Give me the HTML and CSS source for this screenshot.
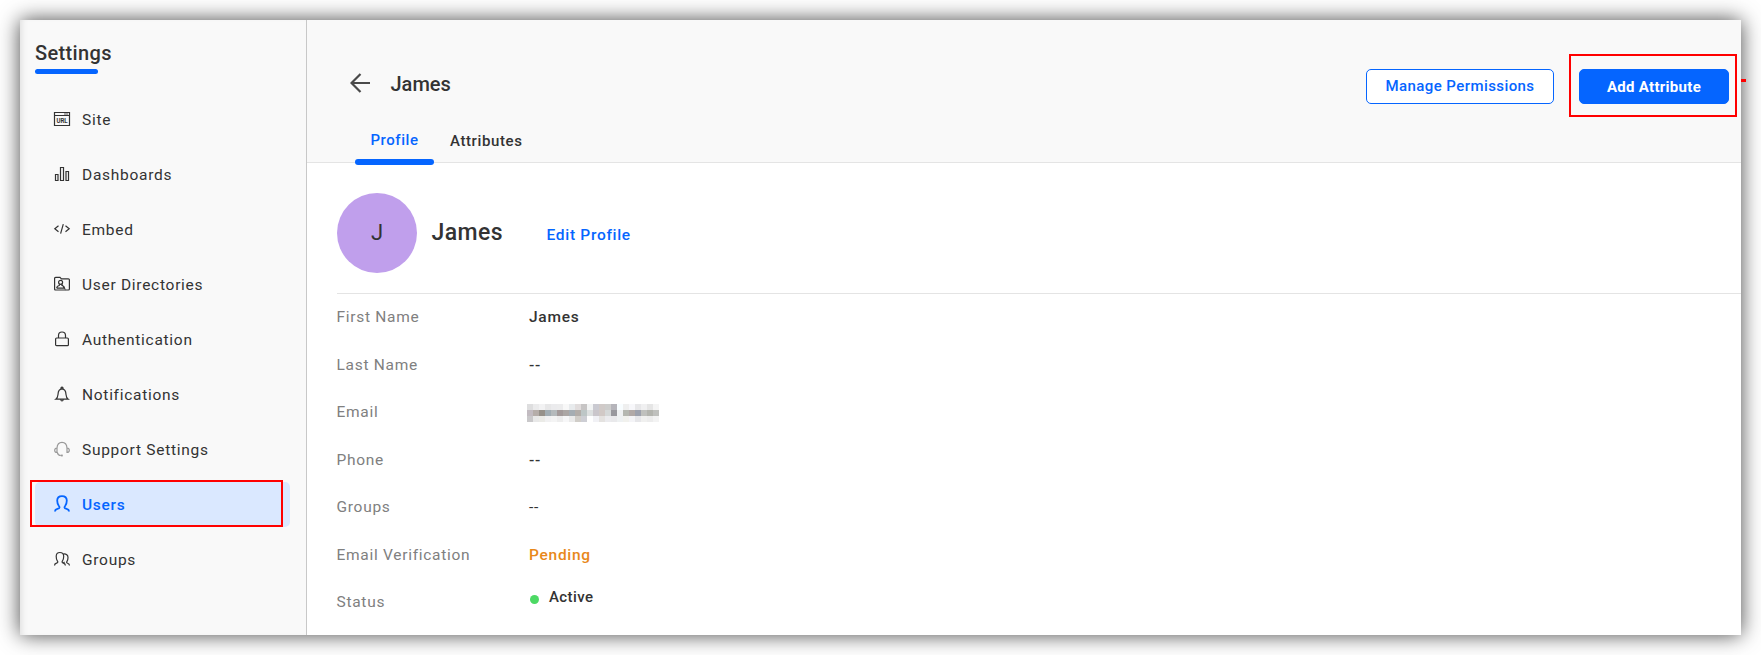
FILE: index.html
```html
<!DOCTYPE html>
<html lang="en">
<head>
<meta charset="utf-8">
<title>Settings - Users</title>
<link rel="stylesheet" href="styles.css">
</head>
<body>
<div class="window">
  <aside class="sidebar">
    <h1 class="sidebar-title">Settings</h1>
    <nav class="menu">
      <a class="item"><svg class="icon" viewBox="0 0 16 16"><path d="M.5 1.500h15v13H.5zM.5 4.500h15" /><path d="M10 3h4" stroke-width=".8"/><text x="2.400" y="12" class="url" textLength="11.200" lengthAdjust="spacingAndGlyphs">URL</text></svg><span>Site</span></a>
      <a class="item"><svg class="icon" viewBox="0 0 16 16"><path d="M1.500 8.500h2.500v6H1.500zM6.500 1.500H9.500v13H6.500zM12 5.500h2.500v9H12z"/></svg><span>Dashboards</span></a>
      <a class="item"><svg class="icon" viewBox="0 0 16 16"><path d="M4.500 4.800.8 7.800l3.700 3M11.500 4.800l3.700 3-3.700 3M9.300 3.200 6.600 12.600"/></svg><span>Embed</span></a>
      <a class="item"><svg class="icon" viewBox="0 0 16 16"><path d="M.6 13V2.400q0-1 1-1H6l1.400 1.400h7q1 0 1 1V13q0 1-1 1H1.600q-1 0-1-1z"/><circle cx="6.600" cy="6.300" r="2"/><path d="M2.600 12.200q.3-2.200 2.600-2.700l.4-1.300M7.600 8.200l.4 1.300q2.300.5 2.600 2.700z M2.600 12.200h8"/></svg><span>User Directories</span></a>
      <a class="item"><svg class="icon" viewBox="0 0 16 16"><rect x="1.600" y="7" width="12.800" height="7.700" rx="1"/><path d="M4.500 7V4.500a3.500 3.500 0 0 1 7 0V7"/></svg><span>Authentication</span></a>
      <a class="item"><svg class="icon" viewBox="0 0 16 16"><path d="M1.800 13.200h12.400q-2-1.500-2.200-4.700-.2-5.500-4-5.700-3.800.2-4 5.700-.2 3.200-2.200 4.700zM7 2.700q-.2-1.500 1-1.500t1 1.500M6.800 13.500q.1 1.500 1.200 1.500t1.200-1.500"/></svg><span>Notifications</span></a>
      <a class="item"><svg class="icon support" viewBox="0 0 16 16"><path d="M3 7q.4-5.600 5-5.600T13 7M3 7v4.500Q.7 11.500.7 9.300T3 7zM13 7v4.500q2.300 0 2.300-2.200T13 7zM3.300 11.500q.7 3 3.500 3"/><path d="M6.800 14.500h2" stroke-width="1.800"/></svg><span>Support Settings</span></a>
      <a class="item active"><svg class="icon" viewBox="0 0 16 16"><path d="M1 15.500q-.1-2.200 3-2.900 1.600-.3 1.500-1.300 0-.6-.6-1.300Q3.200 7.800 3.200 4.500 3.300.1 8 .1t4.800 4.400q0 3.300-1.700 5.500-.6.700-.6 1.300-.1 1 1.500 1.300 3.100.7 3 2.900"/></svg><span>Users</span></a>
      <a class="item"><svg class="icon" viewBox="0 0 16 16"><path d="M.5 14.500q0-1.800 2-2.400 1.500-.4 1.300-1.300L3.300 9.800Q2.200 8.200 2.200 5.300 2.300 1.500 5.900 1.500t3.800 3.800q0 2.900-1.200 4.500l-.4 1q-.2.900 1.300 1.300 2 .6 2 2.400M9.200 3q4.800-.4 4.800 3.500 0 2.300-1 3.800l-.4.900q-.2.700 1 1.100 1.800.6 1.900 2.200M9.500 11.800l1.100-.8"/></svg><span>Groups</span></a>
    </nav>
    <div class="callout callout-users"></div>
  </aside>
  <main class="main">
    <header class="header">
      <div class="header-top">
        <div class="heading"><svg class="back" viewBox="0 0 20 20"><path d="M20 10H1.500M10.500 1 1.500 10l9 9"/></svg><h2 class="page-title">James</h2></div>
        <div class="actions"><button class="btn btn-outline">Manage Permissions</button><button class="btn btn-primary">Add Attribute<i class="callout callout-add"></i></button></div>
      </div>
      <div class="tabs"><a class="tab current">Profile</a><a class="tab">Attributes</a></div>
    </header>
    <section class="content">
      <div class="profile"><div class="avatar">J</div><h3 class="name">James</h3><a class="edit">Edit Profile</a></div>
      <dl class="details">
        <dt>First Name</dt><dd>James</dd>
        <dt>Last Name</dt><dd>--</dd>
        <dt>Email</dt><dd><svg class="mosaic" viewBox="0 0 22 3" shape-rendering="crispEdges"></svg></dd>
        <dt>Phone</dt><dd>--</dd>
        <dt>Groups</dt><dd class="regular">--</dd>
        <dt>Email Verification</dt><dd class="pending">Pending</dd>
        <dt>Status</dt><dd class="status"><i class="dot"></i>Active</dd>
      </dl>
    </section>
  </main>
  <div class="marker"></div>
</div>
<script src="mosaic.js"></script>
</body>
</html>
```

FILE: mosaic.js
```js
// Shades of the redacted e-mail address, one list per row of cells.
const rows = [
  "dededf ebebec f2f2f3 e7e7e8 ebebed ececed f8f8f8 e8ebed e1dddd c7c5c5 f2f4f4 cacad1 d0cac8 cdcdcc b5b4ba f8fdff efefef f7f7fa e7e7e9 f0f0f1 e5e5e5 f4f4f4",
  "c2bbc1 b5ada9 96918a a2adb3 b5babc a49b9b aca7a5 a5adb3 b2ada9 bdc6c6 dde0e0 cac6cb d1c9c6 d5d8d8 98989d eff1f2 b5b7b0 b1a9a7 9da1ad bfc0bd b3b4ae bfc0bd",
  "c9c8ca e8e8e8 ebebe7 f1f1f2 f4f4f4 ededed f7f7f8 eaeaea d0cdc8 cdced4 ffffff f1f1f5 e4e2e0 ebebee e9e9eb eef1f2 f1f1ed f4f4f7 e6e6e9 f0f0ef ececec f3f3f3"
];
const mosaic = document.querySelector(".mosaic");
rows.forEach((row, y) => row.split(" ").forEach((shade, x) => {
  const cell = document.createElementNS("http://www.w3.org/2000/svg", "rect");
  Object.entries({ x, y, width: 1, height: 1, fill: "#" + shade }).forEach(([k, v]) => cell.setAttribute(k, v));
  mosaic.append(cell);
}));
```

FILE: styles.css
```css
* { box-sizing: border-box; }
body { margin: 0; padding: 20px; background: #fff; font-family: Roboto, "Liberation Sans", sans-serif; color: #333; overflow: hidden; }
h1, h2, h3, dl, dd { margin: 0; }
svg { fill: none; stroke: currentColor; display: block; }

.window { position: relative; display: flex; width: 1721px; height: 615px; background: #fff; box-shadow: 0 0 20px rgba(0, 0, 0, .72); }

.sidebar { position: relative; flex: none; width: 287px; padding: 17px 16px 0 15px; background: #f9f9f9; border-right: 1px solid #c8c8c8; box-shadow: inset 6px 0 6px -4px rgba(0, 0, 0, .1); }
.sidebar-title { height: 32px; font-size: 20px; line-height: 32px; font-weight: 500; letter-spacing: .35px; }
.sidebar-title::after { content: ""; display: block; width: 63px; height: 5px; border-radius: 3px; background: #0565ff; }
.menu { display: flex; flex-direction: column; gap: 10px; margin-top: 28px; }
.item { display: flex; align-items: center; gap: 12px; height: 45px; padding-left: 19px; border-radius: 5px; font-size: 15.500px; line-height: 17px; letter-spacing: .72px; }
.item span { padding-top: 2px; }
.icon { width: 16px; height: 16px; margin-top: -1px; overflow: visible; stroke-width: 1.200; }
.url { font: 700 6.500px Roboto, sans-serif; fill: #333; stroke: none; letter-spacing: 0; }
.support { color: #999; }
.active { background: #dae8ff; color: #0565ff; font-weight: 500; }
.active .icon { stroke-width: 1.800; }

.callout { position: absolute; border: 2px solid #f00; }
.callout-users { left: 10px; top: 460px; width: 253px; height: 47px; }
.callout-add { left: -11px; top: -16px; width: 168px; height: 63px; }
.marker { position: absolute; left: 1721px; top: 59px; width: 5px; height: 3px; background: #f00; }

.main { flex: 1; }
.header { display: flex; flex-direction: column; height: 143px; background: #f9f9f9; border-bottom: 1px solid #e4e4e4; }
.header-top { display: flex; justify-content: space-between; padding: 49px 12px 0 43px; height: 97px; }
.heading { display: flex; gap: 20.500px; height: 29px; }
.back { width: 20px; height: 20px; margin-top: 4px; stroke: #4a4a4a; stroke-width: 2.200; }
.page-title { font-size: 20px; line-height: 30px; font-weight: 500; }
.actions { display: flex; gap: 25px; }
.btn { position: relative; height: 35px; padding: 0; border: 1px solid #0565ff; border-radius: 5px; font: 500 15px/33px Roboto, sans-serif; letter-spacing: .42px; }
.btn-outline { width: 188px; background: #fff; color: #0565ff; }
.btn-primary { width: 150px; padding-top: 1px; line-height: 32px; background: #0565ff; color: #fff; font-weight: 700; letter-spacing: .3px; }
.tabs { display: flex; padding-left: 48px; gap: 16px; font-size: 15px; line-height: 54px; font-weight: 500; letter-spacing: .6px; }
.tab { height: 48px; }
.current { width: 79px; text-align: center; line-height: 52px; letter-spacing: .55px; color: #0565ff; }
.current::after { content: ""; display: block; height: 6px; margin-top: -7px; border-radius: 3px; background: #0565ff; }

.content { padding-left: 30px; }
.profile { display: flex; height: 131px; padding-top: 30px; border-bottom: 1px solid #e4e4e4; }
.avatar { width: 80px; height: 80px; border-radius: 50%; background: #c09fec; font-size: 22px; line-height: 80px; text-align: center; }
.name { margin-left: 14.500px; width: 115px; font-size: 23px; line-height: 80px; font-weight: 500; letter-spacing: .4px; }
.edit { color: #0565ff; font-size: 15.500px; font-weight: 500; line-height: 84px; letter-spacing: .7px; }
.details { display: grid; grid-template-columns: 192px 1fr; grid-auto-rows: 47.500px; font-size: 15.500px; line-height: 46px; letter-spacing: .72px; }
.details dt { margin-left: -.5px; color: #808080; }
.details dd { font-weight: 500; }
.details .regular { font-weight: 400; }
.details .pending { color: #e8881a; }
.mosaic { width: 132px; height: 18px; margin: 15px 0 0 -2px; stroke: none; }
.details .status { display: flex; font-size: 15px; line-height: 36px; letter-spacing: .4px; }
.dot { width: 9px; height: 9px; margin: 16px 10px 0 1px; border-radius: 50%; background: #4cd964; }
```
